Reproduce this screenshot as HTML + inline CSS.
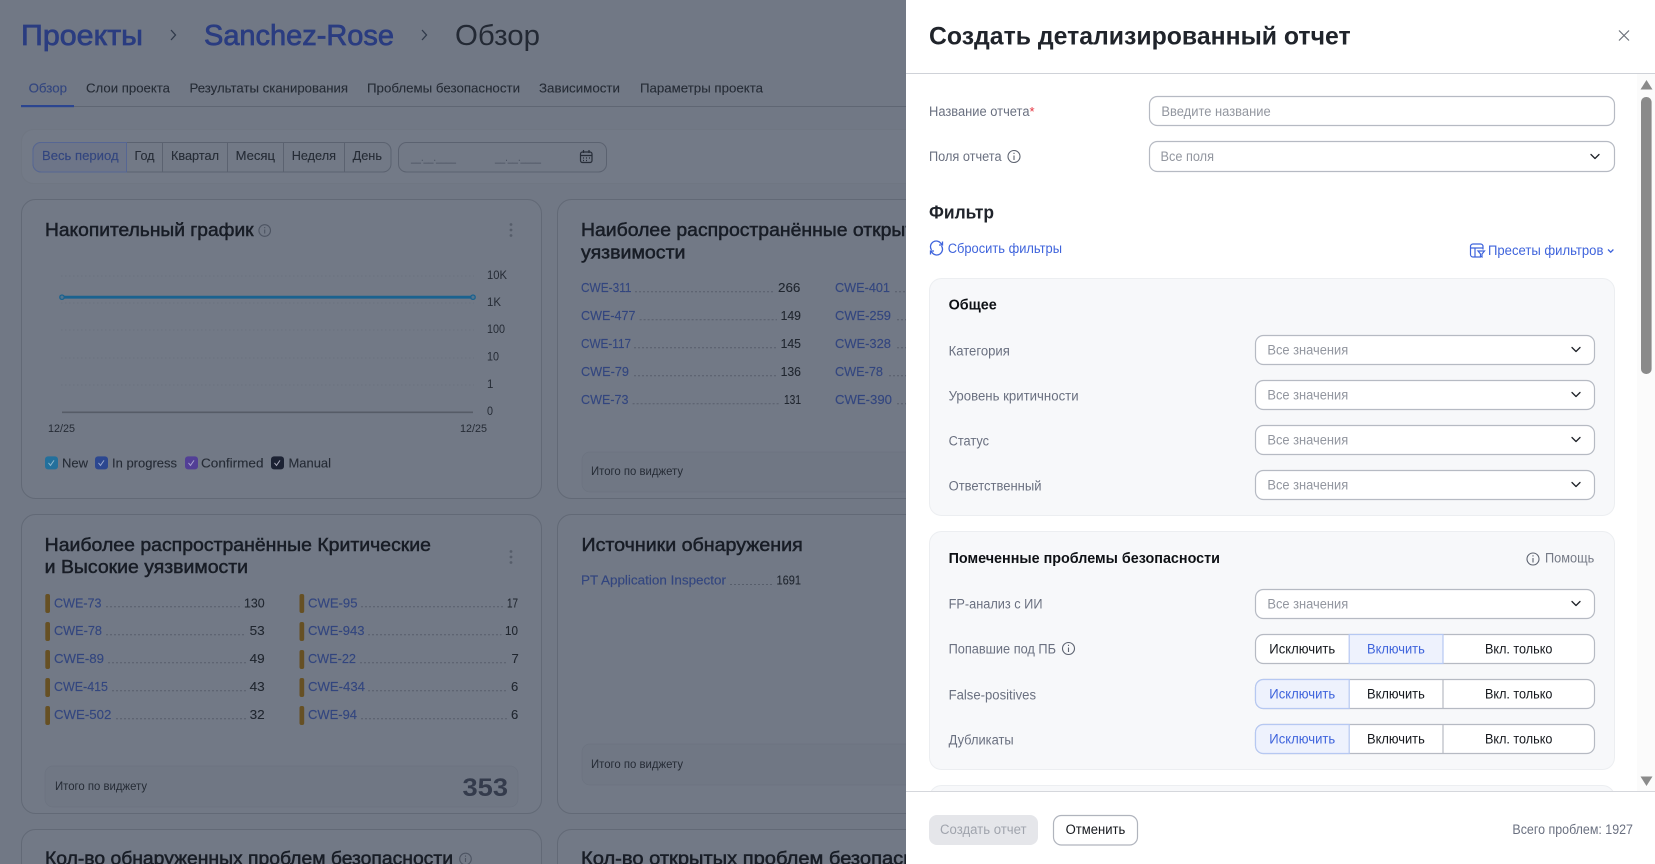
<!DOCTYPE html>
<html lang="ru"><head><meta charset="utf-8"><title>Создать детализированный отчет</title>
<style>
html,body{margin:0;padding:0;width:1655px;height:864px;overflow:hidden;background:#717885}
svg{display:block}
text{font-family:"Liberation Sans","Noto Sans CJK SC",sans-serif;font-size:13px;white-space:pre}
.l{fill:#33467f;stroke:#33467f;stroke-width:.15}.d{fill:#20262f}.m{fill:#252b35;stroke:#252b35;stroke-width:.1}.t{font-size:18.5px;fill:#181d26;stroke:#181d26;stroke-width:.5}
.n{fill:#20262f;stroke:#20262f;stroke-width:.1}.dot{stroke:#575e6b;stroke-width:1;stroke-dasharray:2 2;fill:none}
.card{fill:#727986;stroke:#626976;stroke-width:1}
.foot{fill:#707784;stroke:#6c7380;stroke-width:.7}
.mk{fill:#665024}
.lb{fill:#6a7080;font-size:13.5px}.ph{fill:#92969f;font-size:13.5px}
.fld{fill:#fff;stroke:#b6bac3;stroke-width:1.2}
.b{fill:#15181d;font-size:13.5px}.bl{fill:#3f64dc;font-size:13.5px}
.h{fill:#0d1014;font-size:14.5px;font-weight:700}
.ch{fill:none;stroke:#1f2329;stroke-width:1.3;stroke-linecap:round;stroke-linejoin:round}
.ic{fill:none;stroke:#5d6370;stroke-width:1.1}
.sm{font-size:11.5px;fill:#252b35}
</style></head><body>
<svg width="1655" height="864" viewBox="0 0 1655 864" xmlns="http://www.w3.org/2000/svg">
<!-- dimmed page -->
<rect width="906" height="864" fill="#717885"/>
<text x="21" y="45" textLength="122" lengthAdjust="spacingAndGlyphs" style="font-size:29px;fill:#2a3c80;stroke:#2a3c80;stroke-width:.75">Проекты</text>
<path d="M171 30l4.500 5-4.500 5" fill="none" stroke="#30394a" stroke-width="1.300"/>
<text x="204" y="45" textLength="190" lengthAdjust="spacingAndGlyphs" style="font-size:29px;fill:#2a3c80;stroke:#2a3c80;stroke-width:.75">Sanchez-Rose</text>
<path d="M422 30l4.500 5-4.500 5" fill="none" stroke="#30394a" stroke-width="1.300"/>
<text x="455" y="45" textLength="85" lengthAdjust="spacingAndGlyphs" style="font-size:29px;fill:#232934">Обзор</text>

<text x="28.600" y="92.500" textLength="38.400" lengthAdjust="spacingAndGlyphs" class="l">Обзор</text>
<text x="86" y="92.500" textLength="84" lengthAdjust="spacingAndGlyphs" class="m">Слои проекта</text>
<text x="189.500" y="92.500" textLength="158.500" lengthAdjust="spacingAndGlyphs" class="m">Результаты сканирования</text>
<text x="367" y="92.500" textLength="153" lengthAdjust="spacingAndGlyphs" class="m">Проблемы безопасности</text>
<text x="539" y="92.500" textLength="81" lengthAdjust="spacingAndGlyphs" class="m">Зависимости</text>
<text x="640" y="92.500" textLength="123" lengthAdjust="spacingAndGlyphs" class="m">Параметры проекта</text>
<line x1="21" y1="106.500" x2="906" y2="106.500" stroke="#5f6673" stroke-width="1"/>
<rect x="21" y="105" width="53" height="2.200" fill="#2b4590"/>

<!-- filter band -->
<rect x="21.500" y="129.500" width="900" height="54" rx="12" fill="#737a87" stroke="#6f7682"/>
<rect x="33" y="142.500" width="358" height="29.500" rx="8" fill="#727986" stroke="#5b6270" stroke-width="1"/>
<path d="M126.500 142.500H41a8 8 0 0 0-8 8v13.500a8 8 0 0 0 8 8h85.500z" fill="#6d7588" stroke="#566693"/>
<path d="M162.500 142.500v29.500M227.500 142.500v29.500M283.500 142.500v29.500M344.500 142.500v29.500" stroke="#5b6270"/>
<text x="42" y="160" textLength="76.600" lengthAdjust="spacingAndGlyphs" class="l">Весь период</text>
<text x="134.500" y="160" textLength="20" lengthAdjust="spacingAndGlyphs" class="m">Год</text>
<text x="171" y="160" textLength="48" lengthAdjust="spacingAndGlyphs" class="m">Квартал</text>
<text x="235.600" y="160" textLength="39.400" lengthAdjust="spacingAndGlyphs" class="m">Месяц</text>
<text x="291.700" y="160" textLength="44.300" lengthAdjust="spacingAndGlyphs" class="m">Неделя</text>
<text x="352.600" y="160" textLength="29.400" lengthAdjust="spacingAndGlyphs" class="m">День</text>
<rect x="398.500" y="142.500" width="208" height="29.500" rx="8" fill="#727986" stroke="#5b6270"/>
<text x="411" y="161" textLength="45" lengthAdjust="spacingAndGlyphs" style="fill:#4a5160;font-size:12px">__.__.____</text>
<text x="495" y="161" textLength="46" lengthAdjust="spacingAndGlyphs" style="fill:#4a5160;font-size:12px">__.__.____</text>
<g fill="none" stroke="#272d38" stroke-width="1.200"><rect x="580.500" y="152" width="11.500" height="10.500" rx="2"/><path d="M580.500 155.500h11.500M583.500 150v3M589 150v3M583 158h1M586 158h1M589 158h1M583 160.500h1M586 160.500h1"/></g>

<!-- card 1 -->
<rect x="21.500" y="199.500" width="520" height="299" rx="14" class="card"/>
<text x="45" y="236" textLength="208.600" lengthAdjust="spacingAndGlyphs" class="t">Накопительный график</text>
<g class="ic" style="stroke:#4d5462"><circle cx="264.700" cy="230.500" r="5.800"/><path d="M264.700 229.500v4M264.700 227v1.200"/></g>
<g fill="#565d6a"><circle cx="511" cy="224.500" r="1.400"/><circle cx="511" cy="230" r="1.400"/><circle cx="511" cy="235.500" r="1.400"/></g>
<g fill="none" stroke="#6a717d" stroke-dasharray="1.500 2.500"><line x1="61" y1="276" x2="474" y2="276"/><line x1="61" y1="303" x2="474" y2="303"/><line x1="61" y1="330" x2="474" y2="330"/><line x1="61" y1="358" x2="474" y2="358"/><line x1="61" y1="385" x2="474" y2="385"/></g>
<line x1="62" y1="412.300" x2="473" y2="412.300" stroke="#565c67" stroke-width="1.600"/>
<line x1="62" y1="297.200" x2="473" y2="297.200" stroke="#1a628f" stroke-width="2.900"/>
<circle cx="62" cy="297.200" r="2.200" fill="#56748c" stroke="#1a628f" stroke-width="1.300"/><circle cx="473" cy="297.200" r="2.200" fill="#56748c" stroke="#1a628f" stroke-width="1.300"/>
<text x="487" y="279" textLength="20" lengthAdjust="spacingAndGlyphs" class="sm">10K</text>
<text x="487" y="306" textLength="14" lengthAdjust="spacingAndGlyphs" class="sm">1K</text>
<text x="487" y="333" textLength="18" lengthAdjust="spacingAndGlyphs" class="sm">100</text>
<text x="487" y="360.700" textLength="12" lengthAdjust="spacingAndGlyphs" class="sm">10</text>
<text x="487" y="388" class="sm">1</text>
<text x="487" y="415" textLength="6" lengthAdjust="spacingAndGlyphs" class="sm">0</text>
<text x="48" y="432" textLength="27" lengthAdjust="spacingAndGlyphs" class="sm" style="font-size:11px">12/25</text>
<text x="460" y="432" textLength="27" lengthAdjust="spacingAndGlyphs" class="sm" style="font-size:11px">12/25</text>
<g transform="translate(0,-.6)">
<rect x="45" y="457" width="13" height="13" rx="3" fill="#23709c"/><path d="M48.500 463.500l2 2.500 3.500-5" fill="none" stroke="#8fb8cc" stroke-width="1"/>
<text x="62" y="468" textLength="26" lengthAdjust="spacingAndGlyphs" class="m">New</text>
<rect x="95" y="457" width="13" height="13" rx="3" fill="#2c4790"/><path d="M98.500 463.500l2 2.500 3.500-5" fill="none" stroke="#9aa8cc" stroke-width="1"/>
<text x="112" y="468" textLength="65" lengthAdjust="spacingAndGlyphs" class="m">In progress</text>
<rect x="185" y="457" width="13" height="13" rx="3" fill="#523f96"/><path d="M188.500 463.500l2 2.500 3.500-5" fill="none" stroke="#a9a3cf" stroke-width="1"/>
<text x="201" y="468" textLength="62.500" lengthAdjust="spacingAndGlyphs" class="m">Confirmed</text>
<rect x="271" y="457" width="13" height="13" rx="3" fill="#1c2233"/><path d="M274.500 463.500l2 2.500 3.500-5" fill="none" stroke="#aab" stroke-width="1"/>
<text x="288.500" y="468" textLength="42.500" lengthAdjust="spacingAndGlyphs" class="m">Manual</text>
</g>

<!-- card 2 -->
<rect x="557.500" y="199.500" width="520" height="299" rx="14" class="card"/>
<text x="581" y="236" textLength="358" lengthAdjust="spacingAndGlyphs" class="t">Наиболее распространённые открытые</text>
<text x="581" y="258.500" textLength="104.500" lengthAdjust="spacingAndGlyphs" class="t">уязвимости</text>
<g transform="translate(0,-.7)">
<text x="581" y="292.700" textLength="50.500" lengthAdjust="spacingAndGlyphs" class="l">CWE-311</text><line x1="635" y1="292.500" x2="774" y2="292.500" class="dot"/><text x="778" y="292.700" textLength="22.400" lengthAdjust="spacingAndGlyphs" class="n">266</text>
<text x="581" y="320.700" textLength="54.500" lengthAdjust="spacingAndGlyphs" class="l">CWE-477</text><line x1="639.600" y1="320.500" x2="777" y2="320.500" class="dot"/><text x="780.600" y="320.700" textLength="20.400" lengthAdjust="spacingAndGlyphs" class="n">149</text>
<text x="581" y="348.700" textLength="50" lengthAdjust="spacingAndGlyphs" class="l">CWE-117</text><line x1="634" y1="348.500" x2="777" y2="348.500" class="dot"/><text x="780.600" y="348.700" textLength="20.400" lengthAdjust="spacingAndGlyphs" class="n">145</text>
<text x="581" y="376.700" textLength="48" lengthAdjust="spacingAndGlyphs" class="l">CWE-79</text><line x1="634" y1="376.500" x2="777" y2="376.500" class="dot"/><text x="780.600" y="376.700" textLength="20.400" lengthAdjust="spacingAndGlyphs" class="n">136</text>
<text x="581" y="404.700" textLength="47.500" lengthAdjust="spacingAndGlyphs" class="l">CWE-73</text><line x1="632.600" y1="404.500" x2="780.600" y2="404.500" class="dot"/><text x="784" y="404.700" textLength="17" lengthAdjust="spacingAndGlyphs" class="n">131</text>
<text x="835" y="292.700" textLength="55" lengthAdjust="spacingAndGlyphs" class="l">CWE-401</text><line x1="895" y1="292.500" x2="906" y2="292.500" class="dot"/>
<text x="835" y="320.700" textLength="56" lengthAdjust="spacingAndGlyphs" class="l">CWE-259</text><line x1="897" y1="320.500" x2="906" y2="320.500" class="dot"/>
<text x="835" y="348.700" textLength="56" lengthAdjust="spacingAndGlyphs" class="l">CWE-328</text><line x1="897" y1="348.500" x2="906" y2="348.500" class="dot"/>
<text x="835" y="376.700" textLength="48" lengthAdjust="spacingAndGlyphs" class="l">CWE-78</text><line x1="889" y1="376.500" x2="906" y2="376.500" class="dot"/>
<text x="835" y="404.700" textLength="57" lengthAdjust="spacingAndGlyphs" class="l">CWE-390</text><line x1="897" y1="404.500" x2="906" y2="404.500" class="dot"/>
</g>
<rect x="582" y="452" width="473" height="40" rx="8" class="foot"/>
<text x="591" y="475" textLength="92" lengthAdjust="spacingAndGlyphs" class="sm">Итого по виджету</text>

<!-- card 3 -->
<rect x="21.500" y="514.500" width="520" height="299" rx="14" class="card"/>
<text x="44.700" y="551" textLength="386.300" lengthAdjust="spacingAndGlyphs" class="t">Наиболее распространённые Критические</text>
<text x="44.700" y="573" textLength="203.300" lengthAdjust="spacingAndGlyphs" class="t">и Высокие уязвимости</text>
<g fill="#565d6a"><circle cx="511" cy="551.500" r="1.400"/><circle cx="511" cy="557" r="1.400"/><circle cx="511" cy="562.500" r="1.400"/></g>
<g class="mk"><rect x="45.300" y="594" width="4.700" height="19" rx="2"/><rect x="45.300" y="622" width="4.700" height="19" rx="2"/><rect x="45.300" y="650" width="4.700" height="19" rx="2"/><rect x="45.300" y="678" width="4.700" height="19" rx="2"/><rect x="45.300" y="706" width="4.700" height="19" rx="2"/>
<rect x="299.500" y="594" width="4.700" height="19" rx="2"/><rect x="299.500" y="622" width="4.700" height="19" rx="2"/><rect x="299.500" y="650" width="4.700" height="19" rx="2"/><rect x="299.500" y="678" width="4.700" height="19" rx="2"/><rect x="299.500" y="706" width="4.700" height="19" rx="2"/></g>
<g transform="translate(0,-.7)">
<text x="54" y="608" textLength="47.500" lengthAdjust="spacingAndGlyphs" class="l">CWE-73</text><line x1="106" y1="607.500" x2="240" y2="607.500" class="dot"/><text x="244" y="608" textLength="20.700" lengthAdjust="spacingAndGlyphs" class="n">130</text>
<text x="54" y="635.700" textLength="48" lengthAdjust="spacingAndGlyphs" class="l">CWE-78</text><line x1="106" y1="635.500" x2="246" y2="635.500" class="dot"/><text x="249.600" y="635.700" textLength="15.100" lengthAdjust="spacingAndGlyphs" class="n">53</text>
<text x="54" y="663.700" textLength="50" lengthAdjust="spacingAndGlyphs" class="l">CWE-89</text><line x1="108" y1="663.500" x2="246" y2="663.500" class="dot"/><text x="249.600" y="663.700" textLength="15.100" lengthAdjust="spacingAndGlyphs" class="n">49</text>
<text x="54" y="691.700" textLength="54" lengthAdjust="spacingAndGlyphs" class="l">CWE-415</text><line x1="112" y1="691.500" x2="246" y2="691.500" class="dot"/><text x="249.600" y="691.700" textLength="15.100" lengthAdjust="spacingAndGlyphs" class="n">43</text>
<text x="54" y="719.700" textLength="57.400" lengthAdjust="spacingAndGlyphs" class="l">CWE-502</text><line x1="116" y1="719.500" x2="246" y2="719.500" class="dot"/><text x="249.600" y="719.700" textLength="15.100" lengthAdjust="spacingAndGlyphs" class="n">32</text>
<text x="308" y="608" textLength="49.500" lengthAdjust="spacingAndGlyphs" class="l">CWE-95</text><line x1="361" y1="607.500" x2="504" y2="607.500" class="dot"/><text x="507" y="608" textLength="11" lengthAdjust="spacingAndGlyphs" class="n">17</text>
<text x="308" y="635.700" textLength="56.500" lengthAdjust="spacingAndGlyphs" class="l">CWE-943</text><line x1="368" y1="635.500" x2="501.500" y2="635.500" class="dot"/><text x="505" y="635.700" textLength="13" lengthAdjust="spacingAndGlyphs" class="n">10</text>
<text x="308" y="663.700" textLength="48" lengthAdjust="spacingAndGlyphs" class="l">CWE-22</text><line x1="360" y1="663.500" x2="508" y2="663.500" class="dot"/><text x="511.500" y="663.700" class="n">7</text>
<text x="308" y="691.700" textLength="57" lengthAdjust="spacingAndGlyphs" class="l">CWE-434</text><line x1="368" y1="691.500" x2="508" y2="691.500" class="dot"/><text x="511" y="691.700" class="n">6</text>
<text x="308" y="719.700" textLength="49" lengthAdjust="spacingAndGlyphs" class="l">CWE-94</text><line x1="361" y1="719.500" x2="508" y2="719.500" class="dot"/><text x="511" y="719.700" class="n">6</text>
</g>
<rect x="45" y="766" width="473" height="41" rx="8" class="foot"/>
<text x="55" y="790" textLength="92" lengthAdjust="spacingAndGlyphs" class="sm">Итого по виджету</text>
<text x="462.500" y="796" textLength="45.500" lengthAdjust="spacingAndGlyphs" style="font-size:25px;font-weight:700;fill:#343b4c">353</text>

<!-- card 4 -->
<rect x="557.500" y="514.500" width="520" height="299" rx="14" class="card"/>
<text x="581.500" y="551" textLength="221.200" lengthAdjust="spacingAndGlyphs" class="t">Источники обнаружения</text>
<text x="581" y="584.500" textLength="145" lengthAdjust="spacingAndGlyphs" class="l">PT Application Inspector</text><line x1="730" y1="584.500" x2="773" y2="584.500" class="dot"/><text x="776.500" y="584.500" textLength="24.500" lengthAdjust="spacingAndGlyphs" class="n">1691</text>
<rect x="582" y="744" width="473" height="41" rx="8" class="foot"/>
<text x="591" y="768" textLength="92" lengthAdjust="spacingAndGlyphs" class="sm">Итого по виджету</text>

<!-- cards 5, 6 -->
<rect x="21.500" y="829.500" width="520" height="60" rx="14" class="card"/>
<text x="45" y="864.500" textLength="408" lengthAdjust="spacingAndGlyphs" class="t">Кол-во обнаруженных проблем безопасности</text>
<g class="ic" style="stroke:#4d5462"><circle cx="465.500" cy="859" r="5.800"/><path d="M465.500 858v4M465.500 855.500v1.200"/></g>
<rect x="557.500" y="829.500" width="520" height="60" rx="14" class="card"/>
<text x="581" y="864.500" textLength="375" lengthAdjust="spacingAndGlyphs" class="t">Кол-во открытых проблем безопасности</text>

<!-- drawer -->
<rect x="906" width="749" height="864" fill="#fff"/>
<text x="929" y="44.500" textLength="421.600" lengthAdjust="spacingAndGlyphs" style="font-size:25px;font-weight:700;fill:#20242b">Создать детализированный отчет</text>
<path d="M1619 30.500l10 10M1629 30.500l-10 10" stroke="#6c717a" stroke-width="1.200" fill="none"/>
<line x1="906" y1="73.500" x2="1655" y2="73.500" stroke="#cfd2d8"/>

<text x="929" y="116" textLength="100.500" lengthAdjust="spacingAndGlyphs" class="lb">Название отчета</text><text x="1029.500" y="116" style="fill:#e5333f;font-size:13px">*</text>
<rect x="1149.500" y="96.500" width="465" height="29" rx="8" class="fld"/>
<text x="1161.400" y="116" textLength="109.300" lengthAdjust="spacingAndGlyphs" class="ph">Введите название</text>
<text x="929" y="161" textLength="72.600" lengthAdjust="spacingAndGlyphs" class="lb">Поля отчета</text>
<g class="ic"><circle cx="1014" cy="156.500" r="6"/><path d="M1014 155.500v4.500M1014 152.800v1.200"/></g>
<rect x="1149.500" y="141.500" width="465" height="30" rx="8" class="fld"/>
<text x="1160.500" y="161" textLength="53.500" lengthAdjust="spacingAndGlyphs" class="ph">Все поля</text>
<path d="M1591 154.500l4 4 4-4" class="ch"/>

<text x="929" y="218.300" textLength="65" lengthAdjust="spacingAndGlyphs" style="font-size:18px;font-weight:700;fill:#20242b">Фильтр</text>
<g fill="none" stroke="#3f64dc" stroke-width="1.300"><path d="M931.500 250a5.500 5.500 0 0 1 9.500-6.500l1.500 1.500M941.500 246a5.500 5.500 0 0 1-9.500 6.500l-1.500-1.500"/><path d="M942.500 241.500v3.500h-3.500M930.500 254.500v-3.500h3.500"/></g>
<text x="947.700" y="253" textLength="114.300" lengthAdjust="spacingAndGlyphs" class="bl">Сбросить фильтры</text>
<g fill="none" stroke="#3f64dc" stroke-width="1.200"><path d="M1481 257h-8a2.500 2.500 0 0 1-2.500-2.500v-8a2.500 2.500 0 0 1 2.500-2.500h7.500a2.500 2.500 0 0 1 2.500 2.500v3M1470.500 248h13M1475 248v9"/><path d="M1478 251h6.500l-2.500 3v3l-1.500-.8v-2.200z"/></g>
<text x="1488" y="255" textLength="115.400" lengthAdjust="spacingAndGlyphs" class="bl">Пресеты фильтров</text>
<path d="M1608 249.500l2.700 2.700 2.700-2.700" fill="none" stroke="#3f64dc" stroke-width="1.300"/>

<clipPath id="bd"><rect x="906" y="74" width="749" height="717"/></clipPath>
<g clip-path="url(#bd)">
<rect x="1637" y="74" width="18" height="717" fill="#fbfbfb"/>
<rect x="929.500" y="278.500" width="685" height="237" rx="12" fill="#f7f8fa" stroke="#eceef1"/>
<text x="948.600" y="309.600" textLength="48.200" lengthAdjust="spacingAndGlyphs" class="h">Общее</text>
<text x="948.600" y="355.500" textLength="61.200" lengthAdjust="spacingAndGlyphs" class="lb">Категория</text>
<rect x="1255.500" y="335.500" width="339" height="29" rx="8" class="fld"/><text x="1267.400" y="354.500" textLength="80.800" lengthAdjust="spacingAndGlyphs" class="ph">Все значения</text><path d="M1572 347.500l4 4 4-4" class="ch"/>
<text x="948.600" y="400.500" textLength="130" lengthAdjust="spacingAndGlyphs" class="lb">Уровень критичности</text>
<rect x="1255.500" y="380.500" width="339" height="29" rx="8" class="fld"/><text x="1267.400" y="399.500" textLength="80.800" lengthAdjust="spacingAndGlyphs" class="ph">Все значения</text><path d="M1572 392.500l4 4 4-4" class="ch"/>
<text x="948.600" y="445.500" textLength="40.400" lengthAdjust="spacingAndGlyphs" class="lb">Статус</text>
<rect x="1255.500" y="425.500" width="339" height="29" rx="8" class="fld"/><text x="1267.400" y="444.500" textLength="80.800" lengthAdjust="spacingAndGlyphs" class="ph">Все значения</text><path d="M1572 437.500l4 4 4-4" class="ch"/>
<text x="948.600" y="490.500" textLength="92.900" lengthAdjust="spacingAndGlyphs" class="lb">Ответственный</text>
<rect x="1255.500" y="470.500" width="339" height="29" rx="8" class="fld"/><text x="1267.400" y="489.500" textLength="80.800" lengthAdjust="spacingAndGlyphs" class="ph">Все значения</text><path d="M1572 482.500l4 4 4-4" class="ch"/>

<rect x="929.500" y="531.500" width="685" height="238" rx="12" fill="#f7f8fa" stroke="#eceef1"/>
<text x="948.600" y="563" textLength="271.400" lengthAdjust="spacingAndGlyphs" class="h">Помеченные проблемы безопасности</text>
<g class="ic"><circle cx="1533" cy="559" r="6"/><path d="M1533 558v4.500M1533 555.300v1.200"/></g>
<text x="1545" y="562.700" textLength="49.300" lengthAdjust="spacingAndGlyphs" style="fill:#757a86;font-size:13.500px">Помощь</text>
<text x="948.600" y="608.500" textLength="93.900" lengthAdjust="spacingAndGlyphs" class="lb">FP-анализ с ИИ</text>
<rect x="1255.500" y="589.500" width="339" height="29" rx="8" class="fld"/><text x="1267.400" y="608.500" textLength="80.800" lengthAdjust="spacingAndGlyphs" class="ph">Все значения</text><path d="M1572 601.500l4 4 4-4" class="ch"/>

<text x="948.600" y="653.500" textLength="107.400" lengthAdjust="spacingAndGlyphs" class="lb">Попавшие под ПБ</text>
<g class="ic"><circle cx="1068.500" cy="648.500" r="6"/><path d="M1068.500 647.500v4.500M1068.500 644.800v1.200"/></g>
<rect x="1255.500" y="634.500" width="339" height="29" rx="8" fill="#fff" stroke="#b6bac3" stroke-width="1.200"/>
<rect x="1349.200" y="634.500" width="93.800" height="29" fill="#eef2fd" stroke="#b6c8f2" stroke-width="1.200"/>
<text x="1269.300" y="653.500" textLength="65.900" lengthAdjust="spacingAndGlyphs" class="b">Исключить</text>
<text x="1367" y="653.500" textLength="57.800" lengthAdjust="spacingAndGlyphs" class="bl">Включить</text>
<text x="1485" y="653.500" textLength="67.400" lengthAdjust="spacingAndGlyphs" class="b">Вкл. только</text>

<text x="948.600" y="699.500" textLength="87.400" lengthAdjust="spacingAndGlyphs" class="lb">False-positives</text>
<rect x="1255.500" y="679.500" width="339" height="29" rx="8" fill="#fff" stroke="#b6bac3" stroke-width="1.200"/>
<path d="M1349.200 679.500h-85.700a8 8 0 0 0-8 8v13a8 8 0 0 0 8 8h85.700z" fill="#eef2fd" stroke="#b6c8f2" stroke-width="1.200"/>
<line x1="1443" y1="679.500" x2="1443" y2="708.500" stroke="#b6bac3" stroke-width="1.200"/>
<text x="1269.300" y="698.500" textLength="65.900" lengthAdjust="spacingAndGlyphs" class="bl">Исключить</text>
<text x="1367" y="698.500" textLength="57.800" lengthAdjust="spacingAndGlyphs" class="b">Включить</text>
<text x="1485" y="698.500" textLength="67.400" lengthAdjust="spacingAndGlyphs" class="b">Вкл. только</text>

<text x="948.600" y="744.500" textLength="65" lengthAdjust="spacingAndGlyphs" class="lb">Дубликаты</text>
<rect x="1255.500" y="724.500" width="339" height="29" rx="8" fill="#fff" stroke="#b6bac3" stroke-width="1.200"/>
<path d="M1349.200 724.500h-85.700a8 8 0 0 0-8 8v13a8 8 0 0 0 8 8h85.700z" fill="#eef2fd" stroke="#b6c8f2" stroke-width="1.200"/>
<line x1="1443" y1="724.500" x2="1443" y2="753.500" stroke="#b6bac3" stroke-width="1.200"/>
<text x="1269.300" y="743.500" textLength="65.900" lengthAdjust="spacingAndGlyphs" class="bl">Исключить</text>
<text x="1367" y="743.500" textLength="57.800" lengthAdjust="spacingAndGlyphs" class="b">Включить</text>
<text x="1485" y="743.500" textLength="67.400" lengthAdjust="spacingAndGlyphs" class="b">Вкл. только</text>

<rect x="929.500" y="785.500" width="685" height="40" rx="12" fill="#f7f8fa" stroke="#eceef1"/>
</g>
<!-- scrollbar -->
<path d="M1646.500 80l6 9.500h-12z" fill="#8a8a8a"/>
<rect x="1641" y="97" width="10.600" height="277" rx="5" fill="#8a8a8a"/>
<path d="M1646.500 786l6-9.500h-12z" fill="#8a8a8a"/>
<!-- footer -->
<line x1="906" y1="791.500" x2="1655" y2="791.500" stroke="#d5d7dc"/>
<rect x="929" y="815" width="109" height="30" rx="8" fill="#e5e6ea"/>
<text x="940" y="834" textLength="86.600" lengthAdjust="spacingAndGlyphs" style="fill:#a0a4ad;font-size:13.500px">Создать отчет</text>
<rect x="1053.500" y="815.500" width="84" height="29.500" rx="8" fill="#fff" stroke="#b0b4bd" stroke-width="1.200"/>
<text x="1065.600" y="834" textLength="59.700" lengthAdjust="spacingAndGlyphs" class="b">Отменить</text>
<text x="1512.400" y="834" textLength="120.600" lengthAdjust="spacingAndGlyphs" style="fill:#6a7080;font-size:13.500px">Всего проблем: 1927</text>
</svg>
</body></html>
